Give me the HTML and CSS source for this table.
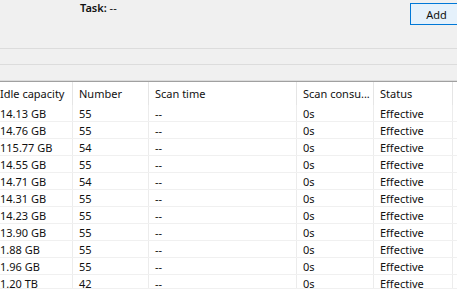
FILE: index.html
```html
<!DOCTYPE html>
<html lang="en">

<head>
    <meta charset="UTF-8">
    <title>Scan List</title>
    <link rel="stylesheet" href="styles.css">
</head>

<body>
    <div class="toolbar">
        <div class="task"><span class="task-label">Task:</span> --</div>
        <button class="add-button">Add</button>
    </div>
    <div class="band"></div>
    <div class="band"></div>
    <div class="list-view">
        <div class="list">
            <div class="row header">
                <div class="cell">Idle capacity</div>
                <div class="cell">Number</div>
                <div class="cell">Scan time</div>
                <div class="cell">Scan consu...</div>
                <div class="cell">Status</div>
                <div class="cell"></div>
            </div>
            <div id="rows"></div>
        </div>
    </div>
    <script>
        const items = [
            ['14.13 GB', 55], ['14.76 GB', 55], ['115.77 GB', 54], ['14.55 GB', 55],
            ['14.71 GB', 54], ['14.31 GB', 55], ['14.23 GB', 55], ['13.90 GB', 55],
            ['1.88 GB', 55], ['1.96 GB', 55], ['1.20 TB', 42]
        ];
        const rows = document.getElementById('rows');
        items.forEach(function(item) {
            const row = document.createElement('div');
            row.className = 'row';
            [item[0], item[1], '--', '0s', 'Effective', ''].forEach(function(text) {
                const cell = document.createElement('div');
                cell.className = 'cell';
                cell.textContent = text;
                row.appendChild(cell);
            });
            rows.appendChild(row);
        });
    </script>
</body>

</html>
```

FILE: styles.css
```css
body {
    margin: 0;
    background: #f0f0f0;
    font-family: "Noto Sans", sans-serif;
    font-size: 11px;
    color: #111111;
    overflow: hidden;
    height: 289px;
}

.toolbar {
    display: flex;
    justify-content: space-between;
    align-items: flex-start;
    height: 48px;
    border-bottom: 1px solid #dcdcdc;
    overflow: hidden;
}

.task {
    padding-left: 80px;
    line-height: 16px;
}

.task-label {
    font-weight: 600;
}

.add-button {
    flex-shrink: 0;
    margin-top: 3px;
    margin-right: -6px;
    width: 53px;
    height: 22px;
    padding: 0;
    border: 1px solid #0078d7;
    background: #e5f1fb;
    font-family: inherit;
    font-size: 11px;
    color: #111111;
}

.band {
    height: 15px;
    border-bottom: 1px solid #dcdcdc;
}

.list-view {
    border-top: 1px solid #a0a0a0;
    background: #ffffff;
    height: 206px;
    overflow: hidden;
}

.list {
    margin-left: -6px;
}

.row {
    display: grid;
    grid-template-columns: 79px 76px 148px 77px 79px 1fr;
    height: 17px;
    border-bottom: 1px solid #f0f0f0;
    box-sizing: border-box;
}

.row.header {
    height: 23px;
    border-bottom: none;
}

.cell {
    padding-left: 6px;
    border-right: 1px solid #ececec;
    white-space: nowrap;
    overflow: hidden;
    line-height: 18px;
}

.header .cell {
    line-height: 23px;
    border-right-color: #e5e5e5;
}
```
